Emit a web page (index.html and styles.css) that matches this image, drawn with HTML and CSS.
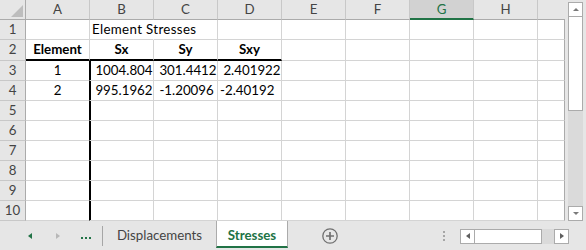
FILE: index.html
```html
<!DOCTYPE html>
<html>
<head>
<meta charset="utf-8">
<title>Stresses</title>
<link rel="stylesheet" href="styles.css">
</head>
<body>
<div class="app">
  <div class="top">
    <div class="sheet">
      <div class="ch corner"><span class="tri"></span></div>
      <div class="ch">A</div>
      <div class="ch">B</div>
      <div class="ch">C</div>
      <div class="ch">D</div>
      <div class="ch">E</div>
      <div class="ch">F</div>
      <div class="ch sel">G</div>
      <div class="ch">H</div>
      <div class="ch last"></div>

      <div class="rh">1</div>
      <div class="c"></div>
      <div class="c ov txt">Element Stresses</div>
      <div class="c"></div>
      <div class="c"></div>
      <div class="c"></div>
      <div class="c"></div>
      <div class="c"></div>
      <div class="c"></div>
      <div class="c last"></div>

      <div class="rh">2</div>
      <div class="c b hb">Element</div>
      <div class="c b hb">Sx</div>
      <div class="c b hb">Sy</div>
      <div class="c b hb">Sxy</div>
      <div class="c"></div>
      <div class="c"></div>
      <div class="c"></div>
      <div class="c"></div>
      <div class="c last"></div>

      <div class="rh">3</div>
      <div class="c ctr vr">1</div>
      <div class="c vl"> 1004.804</div>
      <div class="c"> 301.4412</div>
      <div class="c"> 2.401922</div>
      <div class="c"></div>
      <div class="c"></div>
      <div class="c"></div>
      <div class="c"></div>
      <div class="c last"></div>

      <div class="rh">4</div>
      <div class="c ctr vr">2</div>
      <div class="c vl"> 995.1962</div>
      <div class="c"> -1.20096</div>
      <div class="c">-2.40192</div>
      <div class="c"></div>
      <div class="c"></div>
      <div class="c"></div>
      <div class="c"></div>
      <div class="c last"></div>

      <div class="rh">5</div>
      <div class="c vr"></div><div class="c vl"></div><div class="c"></div><div class="c"></div><div class="c"></div><div class="c"></div><div class="c"></div><div class="c"></div><div class="c last"></div>
      <div class="rh">6</div>
      <div class="c vr"></div><div class="c vl"></div><div class="c"></div><div class="c"></div><div class="c"></div><div class="c"></div><div class="c"></div><div class="c"></div><div class="c last"></div>
      <div class="rh">7</div>
      <div class="c vr"></div><div class="c vl"></div><div class="c"></div><div class="c"></div><div class="c"></div><div class="c"></div><div class="c"></div><div class="c"></div><div class="c last"></div>
      <div class="rh">8</div>
      <div class="c vr"></div><div class="c vl"></div><div class="c"></div><div class="c"></div><div class="c"></div><div class="c"></div><div class="c"></div><div class="c"></div><div class="c last"></div>
      <div class="rh">9</div>
      <div class="c vr"></div><div class="c vl"></div><div class="c"></div><div class="c"></div><div class="c"></div><div class="c"></div><div class="c"></div><div class="c"></div><div class="c last"></div>
      <div class="rh">10</div>
      <div class="c vr"></div><div class="c vl"></div><div class="c"></div><div class="c"></div><div class="c"></div><div class="c"></div><div class="c"></div><div class="c"></div><div class="c last"></div>
    </div>
    <div class="vscroll">
      <div class="sbtn"><span class="up"></span></div>
      <div class="vthumb"></div>
      <div class="vtrack"></div>
      <div class="sbtn"><span class="down"></span></div>
    </div>
  </div>
  <div class="tabs">
    <span class="arr-l"></span>
    <span class="arr-r"></span>
    <span class="dots"><i></i><i></i><i></i></span>
    <span class="sep"></span>
    <div class="tab">Displacements</div>
    <div class="tab active">Stresses</div>
    <svg class="add" width="16" height="16" viewBox="0 0 16 16"><circle cx="8" cy="8" r="7.2" fill="none" stroke="#707070" stroke-width="1.3"/><path d="M8 4v8M4 8h8" stroke="#707070" stroke-width="1.7"/></svg>
    <span class="vdots"><i></i><i></i><i></i></span>
    <div class="hscroll">
      <div class="hbtn"><span class="left"></span></div>
      <div class="hthumb"></div>
      <div class="htrack"></div>
      <div class="hbtn"><span class="right"></span></div>
    </div>
  </div>
</div>
</body>
</html>
```
FILE: styles.css
```css
* { box-sizing: border-box; margin: 0; padding: 0; }
html, body { width: 586px; height: 250px; overflow: hidden; }
body {
  background: #e6e6e6;
  font-family: Lato, "Liberation Sans", sans-serif;
  font-size: 13.3px;
  color: #000;
}
.app { display: grid; grid-template-rows: 221px 29px; }
.top { display: flex; }
.sheet {
  width: 565px;
  display: grid;
  grid-template-columns: 26px repeat(8, 64px) 27px;
  grid-template-rows: 20px 20px 21px repeat(8, 20px);
  background: #fff;
}
.ch {
  background: #e6e6e6;
  border-right: 1px solid #c8c8c8;
  border-bottom: 1px solid #ababab;
  text-align: center;
  line-height: 18px;
  color: #444;
}
.ch.corner {
  border-right-color: #ababab;
  display: flex;
  justify-content: flex-end;
  align-items: flex-end;
  padding: 0 2px 2px 0;
}
.tri {
  width: 0; height: 0;
  border-left: 12px solid transparent;
  border-bottom: 12px solid #bdbdbd;
}
.ch.sel {
  background: #d2d2d2;
  color: #217346;
  border-bottom: 2px solid #217346;
}
.ch.last { border-right: 0; }
.rh {
  background: #e6e6e6;
  border-right: 1px solid #ababab;
  border-bottom: 1px solid #c8c8c8;
  text-align: center;
  line-height: 19px;
  color: #444;
}
.c {
  border-right: 1px solid #d4d4d4;
  border-bottom: 1px solid #d4d4d4;
  line-height: 19px;
  padding: 0 2px;
  white-space: pre;
}
.c.txt { letter-spacing: 0.35px; }
.c.last { border-right-color: #ababab; }
.c.ov { border-right-color: transparent; }
.c.b { font-weight: 700; text-align: center; }
.c.hb { border-bottom: 2px solid #000; }
.c.ctr { text-align: center; }
.c.vr { border-right-color: #000; }
.c.vl { box-shadow: inset 1px 0 0 #000; }

.vscroll {
  width: 21px;
  display: flex;
  flex-direction: column;
  padding: 2px 3px 0 3px;
}
.sbtn {
  height: 15px;
  flex: none;
  background: #fff;
  border: 1px solid #ababab;
  display: flex;
  align-items: center;
  justify-content: center;
}
.up { width: 0; height: 0; border-left: 3px solid transparent; border-right: 3px solid transparent; border-bottom: 3px solid #7a7a7a; }
.down { width: 0; height: 0; border-left: 3px solid transparent; border-right: 3px solid transparent; border-top: 3px solid #7a7a7a; }
.vthumb { height: 94px; flex: none; background: #fff; border: 1px solid #ababab; border-top: 0; }
.vtrack { flex: 1; background: #dadada; }

.tabs {
  display: flex;
  align-items: center;
  height: 29px;
  background: #e6e6e6;
}
.arr-l {
  margin-left: 28px;
  width: 0; height: 0;
  border-top: 3.5px solid transparent;
  border-bottom: 3.5px solid transparent;
  border-right: 4px solid #217346;
}
.arr-r {
  margin-left: 24px;
  width: 0; height: 0;
  border-top: 3.5px solid transparent;
  border-bottom: 3.5px solid transparent;
  border-left: 4px solid #b8b8b8;
}
.dots { margin-left: 21px; margin-top: 5px; display: flex; gap: 2px; }
.dots i { display: block; width: 2px; height: 2px; background: #217346; }
.sep { margin-left: 11px; width: 1px; height: 20px; background: #a6a6a6; }
.tab {
  align-self: stretch;
  margin-bottom: 2px;
  width: 113px;
  padding-top: 5px;
  text-align: center;
  font-size: 13.3px;
  line-height: 18px;
  color: #444;
}
.tab.active {
  width: 72px;
  background: #fff;
  border-left: 1px solid #ababab;
  border-right: 1px solid #ababab;
  border-bottom: 2px solid #217346;
  color: #217346;
  font-weight: 700;
}
.add { margin-left: 34px; flex: none; }
.vdots { margin-left: 105px; display: flex; flex-direction: column; gap: 2px; }
.vdots i { display: block; width: 2px; height: 2px; background: #a6a6a6; }
.hscroll { margin-left: 15px; margin-top: 1px; display: flex; height: 15px; }
.hbtn {
  width: 15px;
  background: #fff;
  border: 1px solid #ababab;
  display: flex;
  align-items: center;
  justify-content: center;
}
.left { width: 0; height: 0; border-top: 3.5px solid transparent; border-bottom: 3.5px solid transparent; border-right: 4px solid #5f5f5f; }
.right { width: 0; height: 0; border-top: 3.5px solid transparent; border-bottom: 3.5px solid transparent; border-left: 4px solid #5f5f5f; }
.hthumb { width: 67px; background: #fff; border: 1px solid #ababab; border-left: 0; }
.htrack { width: 12px; background: #dadada; }
```
